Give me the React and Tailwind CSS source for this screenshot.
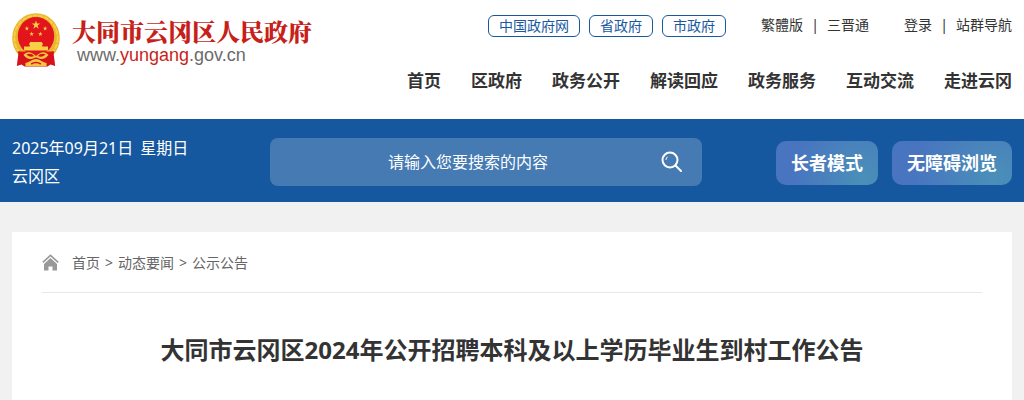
import { useState } from "react";

const portais = ["中国政府网", "省政府", "市政府"];
const menu = ["首页", "区政府", "政务公开", "解读回应", "政务服务", "互动交流", "走进云冈"];
const trilha = ["首页", "动态要闻", "公示公告"];

function Emblem() {
  const star = "M0 -1 L.23 -.31 L.95 -.31 L.36 .12 L.59 .81 L0 .38 L-.59 .81 L-.36 .12 L-.95 -.31 L-.23 -.31Z";

  return (
    <svg viewBox="0 0 50 54" className="w-12 h-[54px] shrink-0" preserveAspectRatio="none" aria-hidden="true">
      <circle cx="25" cy="25" r="24.8" fill="#e9b52c" />
      <circle cx="25" cy="25" r="22.500" fill="none" stroke="#f5cf4a" strokeWidth="2" strokeDasharray="5 1" />
      <circle cx="25" cy="23" r="19" fill="#e3151c" />
      <g fill="#f7d046">
        <path d={star} transform="translate(25 12) scale(4.6)" />
        <path d={star} transform="translate(15.5 15.5) scale(2.500)" />
        <path d={star} transform="translate(34.5 15.5) scale(2.500)" />
        <path d={star} transform="translate(20.5 21) scale(2.500)" />
        <path d={star} transform="translate(29.5 21) scale(2.500)" />
        <path d="M19 29h12l1.500 2.500h-1v2h6v4H12.500v-4h6v-2h-1z" />
      </g>
      <path d="M6 38.500h38l-2 5H8z" fill="#e3151c" />
      <path d="M7 38l4 2.500c3 3 8 4 14 4s11-1 14-4l4-2.500 2 15-5-1.500-3 2H13l-3-2-5 1.500z" fill="#d8121a" />
      <path d="M12 42c5-5 9-2 13 1 4-3 8-6 13-1-4 5-8 5-13 2-5 3-9 3-13-2z" fill="#f3c63e" />
      <path d="M15 41.500q5-2 8 1.500-4 2-8-1.500M35 41.500q-5-2-8 1.500 4 2 8-1.500" fill="#d8121a" />
      <path d="M14 50c5-1 7-4 11-4s6 3 11 4v3H14z" fill="#f3c63e" />
      <path d="M20 51q5-3 10 0" stroke="#d8121a" strokeWidth="1.500" fill="none" />
    </svg>
  );
}

function Header() {
  return (
    <header className="flex justify-between px-3 bg-white h-[119px]">
      <a href="#" className="flex gap-3 self-start pt-[13px]">
        <Emblem />
        <span className="block pt-1">
          <span className="block text-2xl leading-7 font-black text-[#c71f1a] font-['Noto_Serif_CJK_SC','Noto_Sans_CJK_SC',serif]">
            大同市云冈区人民政府
          </span>
          <span className="block pl-[5px] text-lg leading-5 text-[#6b6b6b] font-['Liberation_Sans',sans-serif]">
            www.<span className="text-[#c71f1a]">yungang</span>.gov.cn
          </span>
        </span>
      </a>

      <div className="flex flex-col items-end pt-[15px]">
        <div className="flex items-center text-sm leading-5">
          <div className="flex gap-[9px] mr-[35px]">
            {portais.map((nome) => (
              <a key={nome} href="#" className="px-[10px] border rounded-md border-[#17589f] text-[#17589f]">
                {nome}
              </a>
            ))}
          </div>
          <div className="flex gap-[10px] pb-[2px] mr-[35px]">
            <a href="#">繁體版</a>
            <span className="flex justify-center w-1">|</span>
            <a href="#">三晋通</a>
          </div>
          <div className="flex gap-[10px] pb-[2px]">
            <a href="#">登录</a>
            <span className="flex justify-center w-1">|</span>
            <a href="#">站群导航</a>
          </div>
        </div>

        <nav className="flex gap-[30px] mt-8 text-[17px] leading-6 font-bold">
          {menu.map((item) => (
            <a key={item} href="#">{item}</a>
          ))}
        </nav>
      </div>
    </header>
  );
}

function SearchBar() {
  const [busca, setBusca] = useState("");
  const botao = "h-11 px-[15px] rounded-[10px] text-lg font-bold bg-[radial-gradient(circle_at_85%_85%,#4a90b8,#4874c0_75%)]";

  return (
    <div className="flex items-center justify-between px-3 text-white h-[83px] bg-[#16589f]">
      <div className="leading-7 w-[258px] pt-[2px]">
        <p className="flex gap-[7px]">
          <span>2025年09月21日</span>
          <span>星期日</span>
        </p>
        <p>云冈区</p>
      </div>

      <form onSubmit={(e) => e.preventDefault()} className="flex items-center h-12 rounded-lg w-[432px] mt-[2px] bg-[#457ab3]">
        <input
          aria-label="搜索"
          value={busca}
          onChange={(e) => setBusca(e.target.value)}
          placeholder="请输入您要搜索的内容"
          className="flex-1 min-w-0 h-full pl-5 text-center bg-transparent outline-none placeholder:text-white"
        />
        <button type="submit" aria-label="搜索" className="flex items-center justify-center w-[52px] h-full mr-1">
          <svg viewBox="0 0 22 22" className="size-[22px]" fill="none" stroke="currentColor" strokeWidth="2" strokeLinecap="round">
            <circle cx="9" cy="9" r="7.500" />
            <path d="M14.500 14.500l5.500 5.500" />
            <path d="M5 8.500q.2-1.700 1.200-2.500" strokeWidth="1" />
          </svg>
        </button>
      </form>

      <div className="flex justify-end flex-1 mt-1 gap-[14px]">
        <button type="button" className={botao}>长者模式</button>
        <button type="button" className={botao}>无障碍浏览</button>
      </div>
    </div>
  );
}

export default function App() {
  return (
    <div className="min-h-screen bg-[#f1f1f1] text-[#333] font-['Noto_Sans','Noto_Sans_CJK_SC',sans-serif]">
      <Header />
      <SearchBar />

      <main className="px-[30px] pb-8 mx-3 bg-white mt-[30px]">
        {/* navegação */}
        <div className="flex items-center border-b h-[61px] gap-[13px] border-[#e8e8e8] text-sm text-[#666]">
          <svg viewBox="0 0 17 17" className="size-[17px]" aria-hidden="true">
            <path d="M.8 8.300L8.500 1.300l7.700 7" fill="none" stroke="#999" strokeWidth="1.600" />
            <path d="M8.500 4l6.500 6v6.500h-4.500v-4h-4v4H2V10z" fill="#999" />
          </svg>
          <nav className="flex pt-[2px] gap-[5px]">
            {trilha.map((item, index) => (
              <span key={item} className="flex gap-[5px]">
                {index > 0 && <span>&gt;</span>}
                <a href="#">{item}</a>
              </span>
            ))}
          </nav>
        </div>

        <h1 className="text-2xl font-bold leading-9 text-center mt-[39px]">
          大同市云冈区2024年公开招聘本科及以上学历毕业生到村工作公告
        </h1>
      </main>
    </div>
  );
}
